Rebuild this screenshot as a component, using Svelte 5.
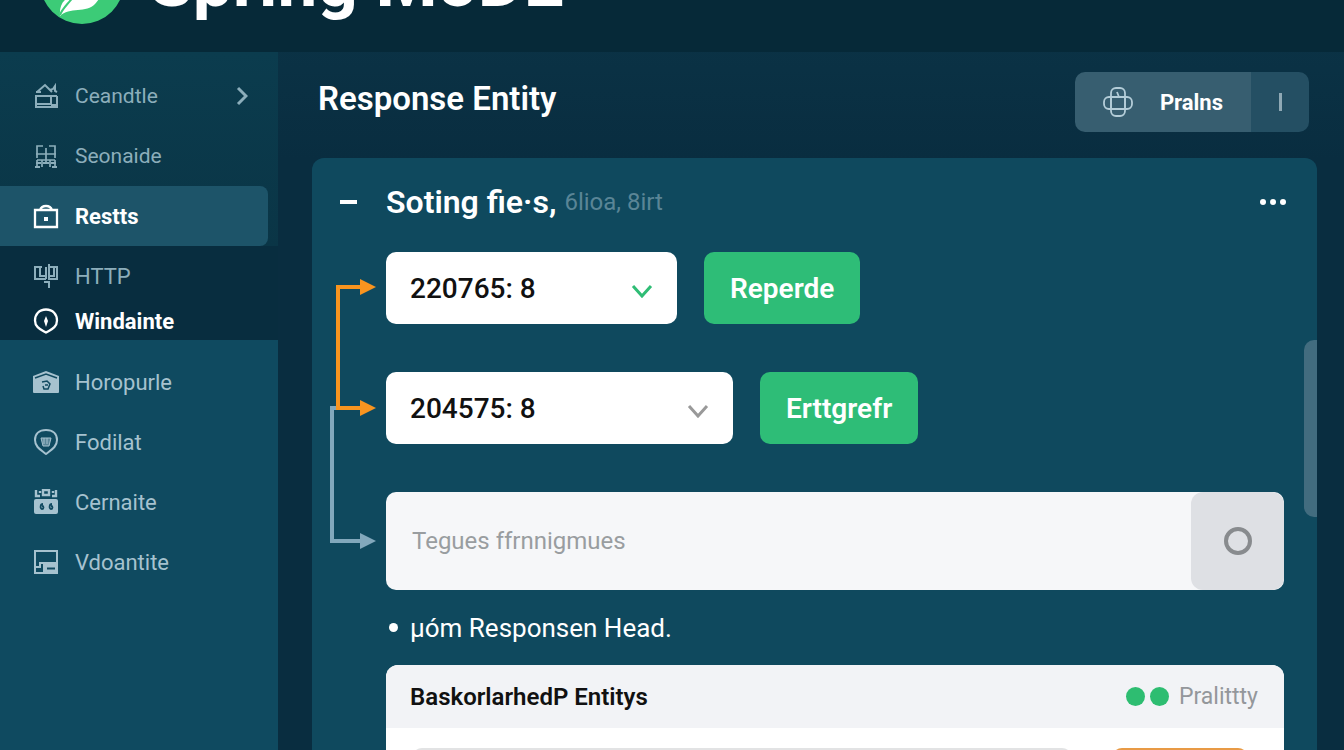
<script>
	const groups = [
		{ tone: 'top', items: [
			{ label: 'Ceandtle', icon: 'house', arrow: true },
			{ label: 'Seonaide', icon: 'gift' },
			{ label: 'Restts', icon: 'bag', active: true }
		] },
		{ tone: 'dark', items: [
			{ label: 'HTTP', icon: 'plug' },
			{ label: 'Windainte', icon: 'compass', strong: true }
		] },
		{ tone: 'light', items: [
			{ label: 'Horopurle', icon: 'home' },
			{ label: 'Fodilat', icon: 'pin' },
			{ label: 'Cernaite', icon: 'robot' },
			{ label: 'Vdoantite', icon: 'window' }
		] }
	];

	let first = $state('220765: 8');
	let second = $state('204575: 8');
	let query = $state('');
</script>

{#snippet glyph(name)}
	<svg class="icon" viewBox="0 0 26 26" fill="none" stroke="currentColor" stroke-width="2" aria-hidden="true">
		{#if name === 'house'}
			<path d="M4 9l8-7 7 7M17 7l3-1 2-3v5l2 1M3 9h5M2 13h22M3 13v11h21V13M3 21h15v-8M18 22h6" />
		{:else if name === 'gift'}
			<path d="M10 3H4v12M16 3h6v12M3 11h20M13 5v15M4 17h18M4 17v7M9 17v7M17 17v7M22 17v7" stroke-width="1.700" />
			<path d="M3 20h5M10 20h6M18 20h5M2 24h5M19 24h5" />
		{:else if name === 'bag'}
			<path d="M2 7h22v17H2zM7 7c1-3 3-4 6-4s5 1 6 4" stroke-width="2.300" />
			<path d="M11 14h4v4h-4z" fill="currentColor" stroke="none" />
		{:else if name === 'plug'}
			<path d="M9 4H2v12h11M7 4v9h5M13 4v12M16 1v16M16 4h8v12h-8M21 5v8h-4M11 19h5v6" />
		{:else if name === 'compass'}
			<path d="M13 1.500c7 0 11 5 11 11 0 7-6 9-11 12-5-3-11-5-11-12 0-6 4-11 11-11z" stroke-width="2.300" />
			<path d="M13 8l2 5-2 6-2-6z" fill="currentColor" stroke="none" />
		{:else if name === 'home'}
			<path d="M0 7L13 2l13 5v16q0 1-1 1H1q-1 0-1-1z" fill="currentColor" stroke="none" />
			<path d="M2 9l11-4 11 4M9 13l5-1 3 3-2 5h-4l-1-3M12 16h3" stroke="#124a60" stroke-width="1.500" />
		{:else if name === 'pin'}
			<path d="M13 1c7 0 11 4 11 10 0 7-6 10-11 14C8 21 2 18 2 11 2 5 6 1 13 1z" />
			<path d="M8 9h10l-2 8h-6zM11 9v6M14 9v6" fill="currentColor" fill-opacity=".5" stroke-width="1" />
		{:else if name === 'robot'}
			<path d="M1 12q0-2 2-2h20q2 0 2 2v11q0 2-2 2H3q-2 0-2-2z" fill="currentColor" stroke="none" />
			<path d="M3 1v6h4M10 1h6v5h-6zM19 7h4V1M7 2v2M20 2v2" stroke-width="2.400" />
			<path d="M10 15c-3 0-3 5-1 5s2-3 0-3M19 15c-3 0-3 5-1 5s2-3 0-3" stroke="#124a60" stroke-width="1.800" />
		{:else}
			<path d="M12 24H2V2h22v22M2 18h5v-4h17" />
			<path d="M11 15h13v9H11z" fill="currentColor" />
			<path d="M14 19.500h8" stroke="#124a60" />
		{/if}
	</svg>
{/snippet}

<div class="app">
	<header class="brand">
		<svg class="logo" viewBox="0 0 84 84" aria-hidden="true">
			<circle cx="42" cy="42" r="42" fill="#3ccb77" />
			<path d="M20 76c-1-12 4-18 16-22 14-5 22-10 25-26 4 14 2 28-6 36-8 9-26 3-35 12z" fill="#fff" />
			<path d="M20 75c2-6 7-10 14-19" fill="none" stroke="#3ccb77" stroke-width="2" />
		</svg>
		<span>Spring MoDE</span>
	</header>

	<nav>
		{#each groups as group}
			<ul class={group.tone}>
				{#each group.items as item}
					<li>
						<a href="#{item.label}" class:active={item.active} class:strong={item.strong}>
							{@render glyph(item.icon)}
							<span>{item.label}</span>
							{#if item.arrow}
								<svg class="arrow" viewBox="0 0 12 20" aria-hidden="true"><path d="M2 2l8 8-8 8" /></svg>
							{/if}
						</a>
					</li>
				{/each}
			</ul>
		{/each}
	</nav>

	<main>
		<div class="heading">
			<h1>Response Entity</h1>
			<div class="split">
				<button class="plain">
					<svg viewBox="0 0 30 30" fill="none" stroke="currentColor" stroke-width="1.800" aria-hidden="true">
						<rect x="8" y="1" width="14" height="28" rx="5" />
						<rect x="1" y="10" width="28" height="12" rx="5" />
						<path d="M8 10v12M22 10v12M14 5l2 5" />
					</svg>
					Pralns
				</button>
				<button class="more" aria-label="More"><i></i></button>
			</div>
		</div>

		<section class="panel">
			<div class="title">
				<button class="fold" aria-label="Collapse"><i></i></button>
				<h2>Soting fie·s,</h2>
				<span>6lioa, 8irt</span>
				<button class="dots" aria-label="Options"><i></i><i></i><i></i></button>
			</div>

			<div class="flow">
				<svg class="links" viewBox="0 0 60 338" aria-hidden="true">
					<g class="muted">
						<path d="M12 156H6v133h30" />
						<path class="tip" d="M34 281l16 8-16 8z" />
					</g>
					<g class="hot">
						<path d="M36 35H12v121h24" />
						<path class="tip" d="M34 27l16 8-16 8zM34 148l16 8-16 8z" />
					</g>
				</svg>

				<div class="row">
					<div class="pick">
						<select bind:value={first} aria-label="First entity"><option>220765: 8</option></select>
						<svg class="green" viewBox="0 0 22 14" aria-hidden="true"><path d="M2 2l9 10 9-10" /></svg>
					</div>
					<button class="go">Reperde</button>
				</div>
				<div class="row">
					<div class="pick wide">
						<select bind:value={second} aria-label="Second entity"><option>204575: 8</option></select>
						<svg viewBox="0 0 22 14" aria-hidden="true"><path d="M2 2l9 10 9-10" /></svg>
					</div>
					<button class="go">Erttgrefr</button>
				</div>
				<div class="search">
					<input type="text" bind:value={query} placeholder="Tegues ffrnnigmues" aria-label="Tegues ffrnnigmues" />
					<button aria-label="Search"><i></i></button>
				</div>
			</div>

			<p class="note">µóm Responsen Head.</p>

			<article class="card">
				<div class="card-head">
					<h3>BaskorlarhedP Entitys</h3>
					<i></i><i></i>
					<span>Pralittty</span>
				</div>
				<div class="card-body">
					<div class="bar"></div>
					<div class="bar orange"></div>
				</div>
			</article>

			<div class="thumb"></div>
		</section>
	</main>
</div>

<style>
	:global(body) {
		background: #092d40;
	}
	.app {
		display: grid;
		grid-template: 52px minmax(0, 1fr) / 278px minmax(0, 1fr);
		height: 100vh;
		overflow: hidden;
		color: #fff;
		background: linear-gradient(#0b3447, #092d40 160px);
		font-family: Roboto, "Liberation Sans", sans-serif;
	}
	h1, h2, h3, ul, p {
		margin: 0;
		padding: 0;
	}
	button {
		border: 0;
		padding: 0;
		color: inherit;
		background: none;
		font-family: inherit;
		cursor: pointer;
	}
	i {
		display: block;
	}

	.brand {
		grid-column: 1 / -1;
		display: flex;
		align-items: flex-end;
		gap: 25px;
		padding: 0 40px 28px;
		overflow: hidden;
		box-sizing: border-box;
		background: #062938;
		font-size: 71px;
		font-weight: 700;
		line-height: 84px;
	}
	.logo {
		flex: none;
		width: 84px;
		height: 84px;
	}

	nav {
		display: flex;
		flex-direction: column;
		background: #0f4a60;
	}
	nav ul {
		list-style: none;
	}
	.top {
		padding-top: 14px;
		background: linear-gradient(#0b3c4e, #0a3546);
	}
	.dark {
		padding-bottom: 4px;
		background: #082d3f;
	}
	.light {
		padding-top: 12px;
	}
	nav a {
		display: flex;
		align-items: center;
		gap: 16px;
		height: 60px;
		padding: 0 30px 0 33px;
		color: #8caebb;
		font-size: 22px;
		text-decoration: none;
	}
	.top a {
		font-size: 21px;
	}
	.light a {
		color: #a6c2cf;
	}
	nav a.strong {
		height: 30px;
	}
	nav a.active {
		margin-right: 10px;
		border-radius: 0 8px 8px 0;
		background: #1d5469;
		font-size: 22px;
	}
	nav a.active,
	nav a.strong {
		color: #fff;
		font-weight: 700;
	}
	.icon {
		width: 26px;
		height: 26px;
	}
	.arrow {
		width: 12px;
		height: 20px;
		margin-left: auto;
		fill: none;
		stroke: #8caebb;
		stroke-width: 3;
	}

	main {
		display: flex;
		flex-direction: column;
		padding: 20px 27px 0 34px;
	}
	.heading {
		display: flex;
		align-items: flex-start;
		justify-content: space-between;
		height: 60px;
		margin-bottom: 26px;
		padding: 0 8px 0 6px;
	}
	h1 {
		font-size: 33px;
		font-weight: 600;
		line-height: 54px;
	}
	.split {
		display: flex;
		height: 60px;
		overflow: hidden;
		border-radius: 10px;
	}
	.plain {
		display: flex;
		align-items: center;
		gap: 27px;
		padding: 0 28px;
		background: #375e70;
		font-size: 22px;
		font-weight: 700;
	}
	.plain svg {
		width: 30px;
		height: 30px;
		color: #b4cdd8;
	}
	.more {
		display: grid;
		place-items: center;
		width: 58px;
		background: #244f63;
	}
	.more i {
		width: 3px;
		height: 18px;
		background: #8fa9b5;
	}

	.panel {
		position: relative;
		flex: 1;
		padding: 24px 33px 0 74px;
		border-radius: 12px 12px 0 0;
		background: #0f495e;
	}
	.title {
		display: flex;
		align-items: center;
		gap: 8px;
		height: 40px;
		margin: 0 0 30px -46px;
	}
	.fold {
		width: 38px;
		height: 40px;
	}
	.fold i {
		width: 17px;
		height: 4px;
		background: #fff;
	}
	h2 {
		font-size: 32px;
		font-weight: 600;
		line-height: 40px;
	}
	.title span {
		color: #5a8596;
		font-size: 24px;
	}
	.dots {
		display: flex;
		gap: 4px;
		margin: 0 -2px 0 auto;
		padding: 8px 0;
	}
	.dots i {
		width: 6px;
		height: 6px;
		border-radius: 50%;
		background: #fff;
	}

	.flow {
		position: relative;
		display: flex;
		flex-direction: column;
		gap: 48px;
	}
	.links {
		position: absolute;
		top: 0;
		right: 100%;
		width: 60px;
		height: 338px;
		fill: none;
		stroke-width: 4;
	}
	.muted {
		stroke: #82a8bc;
	}
	.hot {
		stroke: #f8941f;
	}
	.links .tip {
		stroke: none;
	}
	.muted .tip {
		fill: #82a8bc;
	}
	.hot .tip {
		fill: #f8941f;
	}
	.row {
		display: flex;
		gap: 27px;
		height: 72px;
	}
	.pick {
		position: relative;
		width: 291px;
	}
	.pick.wide {
		width: 347px;
	}
	select {
		width: 100%;
		height: 100%;
		padding: 0 60px 0 24px;
		border: 0;
		border-radius: 10px;
		appearance: none;
		color: #111;
		background: #fff;
		font: 500 28px Roboto, "Liberation Sans", sans-serif;
	}
	.pick svg {
		position: absolute;
		top: 32px;
		right: 24px;
		width: 22px;
		height: 14px;
		fill: none;
		stroke: #999;
		stroke-width: 3;
		pointer-events: none;
	}
	.pick .green {
		stroke: #2fbd75;
	}
	.go {
		padding: 0 26px;
		border-radius: 10px;
		background: #2ebd77;
		font-size: 28px;
		font-weight: 600;
	}
	.search {
		display: flex;
		height: 98px;
		overflow: hidden;
		border-radius: 10px;
		background: #f6f7f9;
	}
	.search input {
		flex: 1;
		min-width: 0;
		padding: 0 26px;
		border: 0;
		background: none;
		font: 24px Roboto, "Liberation Sans", sans-serif;
	}
	.search input::placeholder {
		color: #999da0;
	}
	.search button {
		display: grid;
		place-items: center;
		width: 93px;
		border-radius: 12px;
		background: #dee0e4;
	}
	.search i {
		width: 20px;
		height: 20px;
		border: 4px solid #888b8e;
		border-radius: 50%;
	}

	.note {
		display: flex;
		align-items: center;
		gap: 12px;
		height: 75px;
		padding-left: 3px;
		font-size: 26px;
	}
	.note::before {
		width: 9px;
		height: 9px;
		border-radius: 50%;
		background: #fff;
		content: "";
	}

	.card {
		overflow: hidden;
		border-radius: 12px;
		color: #111;
		background: #fff;
	}
	.card-head {
		display: flex;
		align-items: center;
		gap: 5px;
		height: 63px;
		padding: 0 26px 0 24px;
		background: #f2f3f6;
	}
	h3 {
		margin-right: auto;
		font-size: 24px;
		font-weight: 600;
	}
	.card-head i {
		width: 19px;
		height: 19px;
		border-radius: 50%;
		background: #2ebd71;
	}
	.card-head span {
		margin-left: 5px;
		color: #94979b;
		font-size: 23px;
	}
	.card-body {
		display: flex;
		gap: 40px;
		padding: 20px 36px 24px 26px;
	}
	.bar {
		flex: 1;
		height: 48px;
		border-radius: 10px;
		background: #e2e3e4;
	}
	.bar.orange {
		flex: 0 0 136px;
		background: #e89a45;
	}
	.thumb {
		position: absolute;
		top: 182px;
		right: 0;
		width: 13px;
		height: 177px;
		border-radius: 10px 0 0 10px;
		background: #426c7f;
	}
</style>
